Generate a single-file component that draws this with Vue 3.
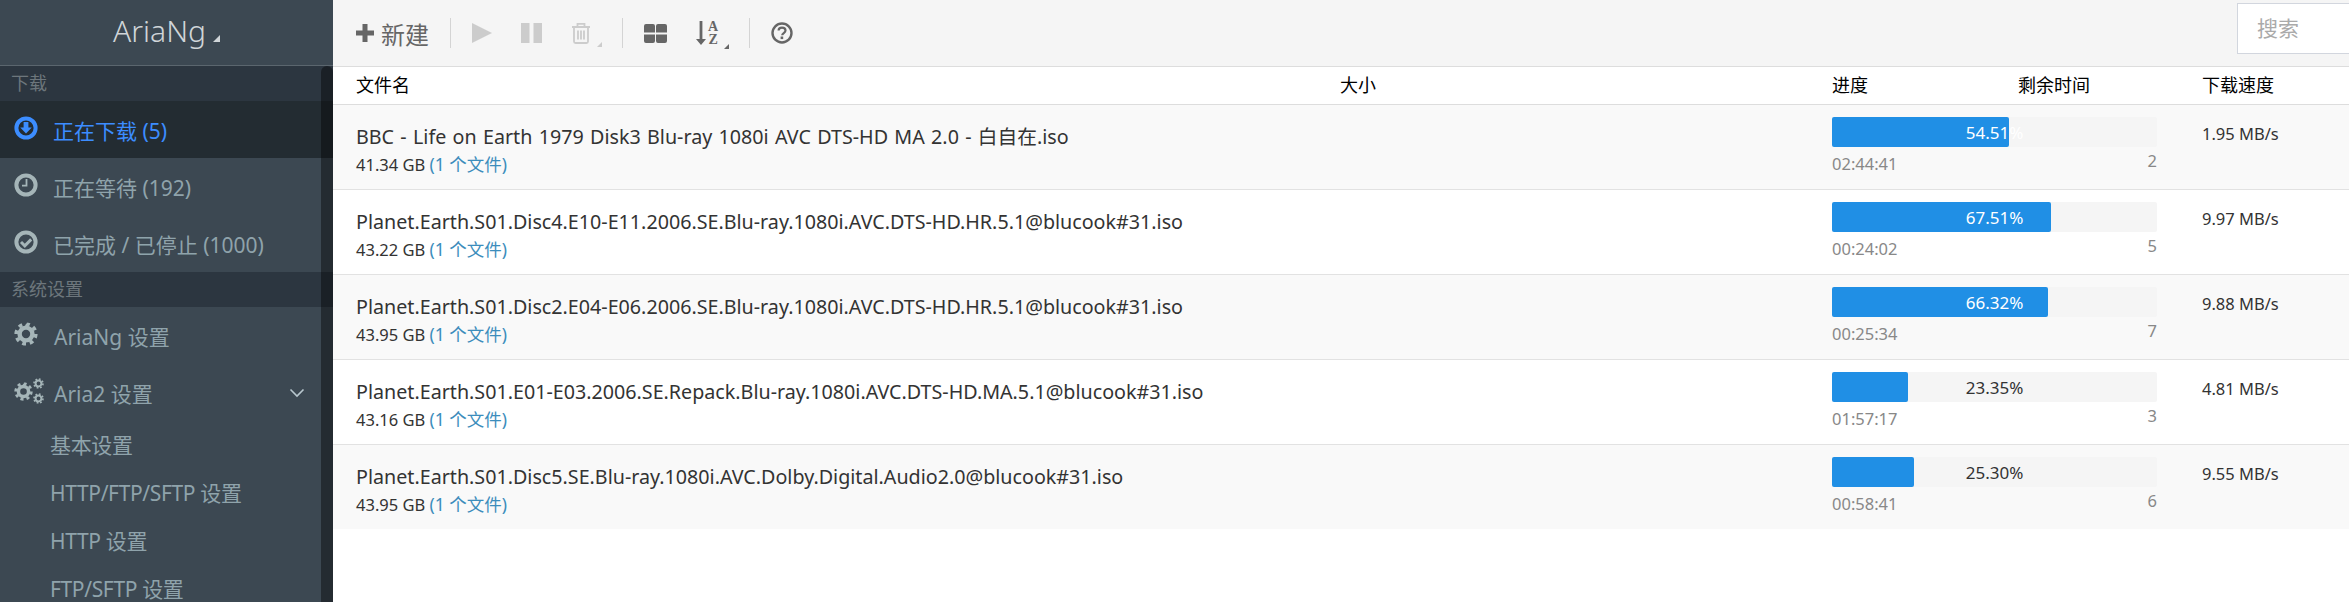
<template>
  <div class="app">
    <svg width="0" height="0" class="defs">
      <defs>
        <symbol id="gear" viewBox="0 0 24 24">
          <circle cx="12" cy="12" r="6.4" fill="none" stroke="currentColor" stroke-width="4.4" />
          <circle cx="12" cy="12" r="9.8" fill="none" stroke="currentColor" stroke-width="3.6" pathLength="64" stroke-dasharray="4 4" />
        </symbol>
      </defs>
    </svg>

    <aside class="sidebar">
      <div class="logo">AriaNg<span class="corner logo-corner"></span></div>
      <div class="scroll-track"></div>
      <div class="menu">
        <div class="menu-head">下载</div>
        <div class="menu-item active">
          <svg class="menu-icon" viewBox="0 0 24 24">
            <circle cx="12" cy="12" r="9.6" fill="none" stroke="currentColor" stroke-width="4" />
            <path d="M9.6 6h4.8v5.4h3.4L12 17.4l-5.800-6h3.400z" fill="currentColor" />
          </svg>
          <span>正在下载 (5)</span>
        </div>
        <div class="menu-item">
          <svg class="menu-icon" viewBox="0 0 24 24">
            <circle cx="12" cy="12" r="9.6" fill="none" stroke="currentColor" stroke-width="4" />
            <path d="M13.400 6v7.600H8v-1.800h3.600V6z" fill="currentColor" />
          </svg>
          <span>正在等待 (192)</span>
        </div>
        <div class="menu-item">
          <svg class="menu-icon" viewBox="0 0 24 24">
            <circle cx="12" cy="12" r="9.6" fill="none" stroke="currentColor" stroke-width="4" />
            <path d="M7 12l3.800 3.800L17.200 9.400" fill="none" stroke="currentColor" stroke-width="3" />
          </svg>
          <span>已完成 / 已停止 (1000)</span>
        </div>
        <div class="menu-head">系统设置</div>
        <div class="menu-item">
          <svg class="menu-icon"><use href="#gear" /></svg>
          <span class="latin-first">AriaNg 设置</span>
        </div>
        <div class="menu-item">
          <svg class="menu-icon gears" viewBox="0 0 30 26">
            <use href="#gear" x="0" y="4" width="19" height="19" />
            <use href="#gear" x="19" y="0" width="11" height="11" />
            <use href="#gear" x="19" y="15" width="11" height="11" />
          </svg>
          <span>Aria2 设置</span>
          <svg class="chevron" viewBox="0 0 16 10">
            <path d="M1.500 1.500L8 8l6.500-6.500" fill="none" stroke="currentColor" stroke-width="1.600" />
          </svg>
        </div>
        <div class="sub-item" v-for="item in subItems" :key="item">{{ item }}</div>
      </div>
    </aside>

    <main class="main">
      <div class="toolbar">
        <div class="tool new">
          <svg class="tool-plus" viewBox="0 0 20 20"><path d="M7.500 1h5v6.500H19v5h-6.500V19h-5v-6.500H1v-5h6.500z" fill="currentColor" /></svg>
          <span>新建</span>
        </div>
        <i class="sep"></i>
        <div class="tool disabled">
          <svg width="20" height="22" viewBox="0 0 20 22"><path d="M0 1l20 10L0 21z" fill="currentColor" /></svg>
        </div>
        <div class="tool disabled">
          <svg width="21" height="22" viewBox="0 0 21 22"><path d="M0 1h8.500v20H0zM12.500 1H21v20h-8.500z" fill="currentColor" /></svg>
        </div>
        <div class="tool disabled wide">
          <svg width="20" height="22" viewBox="0 0 20 22">
            <path d="M1 5h18M6.500 5V1.800h7V5M3 5v14.500a1.500 1.500 0 0 0 1.500 1.500h11a1.500 1.500 0 0 0 1.500-1.500V5M7 8.500v9M10 8.500v9M13 8.500v9" fill="none" stroke="currentColor" stroke-width="1.800" />
          </svg>
          <span class="corner"></span>
        </div>
        <i class="sep"></i>
        <div class="tool">
          <svg width="23" height="19" viewBox="0 0 23 19"><path d="M2 0h7a2 2 0 0 1 2 2v6.500H0V2a2 2 0 0 1 2-2zM14 0h7a2 2 0 0 1 2 2v6.500H12V2a2 2 0 0 1 2-2zM0 10.500h11V17a2 2 0 0 1-2 2H2a2 2 0 0 1-2-2zM12 10.500h11V17a2 2 0 0 1-2 2h-7a2 2 0 0 1-2-2z" fill="currentColor" /></svg>
        </div>
        <div class="tool sort wide">
          <svg width="10" height="24" viewBox="0 0 10 24"><path d="M3.600 0h2.800v18H10l-5 6-5-6h3.600z" fill="currentColor" /></svg>
          <span class="az"><b>A</b><b>Z</b></span>
          <span class="corner"></span>
        </div>
        <i class="sep"></i>
        <div class="tool">
          <svg width="22" height="22" viewBox="0 0 22 22">
            <circle cx="11" cy="11" r="9.500" fill="none" stroke="currentColor" stroke-width="2.400" />
            <path d="M7.600 8.600c0-2 1.500-3 3.400-3s3.500 1.100 3.500 3c0 2.400-3.300 2.500-3.300 4.600" fill="none" stroke="currentColor" stroke-width="2.200" />
            <path d="M9.600 14.500h2.600v2.600H9.600z" fill="currentColor" />
          </svg>
        </div>
        <div class="search">搜索</div>
      </div>

      <div class="table-head">
        <span class="col-name">文件名</span>
        <span class="col-size">大小</span>
        <span class="col-progress">进度</span>
        <span class="col-remain">剩余时间</span>
        <span class="col-speed">下载速度</span>
      </div>

      <div class="row" v-for="task in tasks" :key="task.name">
        <div class="task-info">
          <div class="task-name">{{ task.name }}</div>
          <div class="task-size">{{ task.size }} <span class="files">(1 个文件)</span></div>
        </div>
        <div class="task-progress">
          <div class="bar">
            <div class="bar-fill" :style="{ width: task.percent + '%' }"></div>
            <span class="bar-text" :class="{ light: task.percent > 50 }">{{ task.percent.toFixed(2) }}%</span>
          </div>
          <div class="task-meta">
            <span class="time">{{ task.time }}</span>
            <span class="conn">{{ task.conn }}</span>
          </div>
        </div>
        <div class="task-speed">{{ task.speed }}</div>
      </div>
    </main>
  </div>
</template>

<script setup>
const subItems = ['基本设置', 'HTTP/FTP/SFTP 设置', 'HTTP 设置', 'FTP/SFTP 设置']

const tasks = [
  { name: 'BBC - Life on Earth 1979 Disk3 Blu-ray 1080i AVC DTS-HD MA 2.0 - 白自在.iso', size: '41.34 GB', percent: 54.51, time: '02:44:41', conn: 2, speed: '1.95 MB/s' },
  { name: 'Planet.Earth.S01.Disc4.E10-E11.2006.SE.Blu-ray.1080i.AVC.DTS-HD.HR.5.1@blucook#31.iso', size: '43.22 GB', percent: 67.51, time: '00:24:02', conn: 5, speed: '9.97 MB/s' },
  { name: 'Planet.Earth.S01.Disc2.E04-E06.2006.SE.Blu-ray.1080i.AVC.DTS-HD.HR.5.1@blucook#31.iso', size: '43.95 GB', percent: 66.32, time: '00:25:34', conn: 7, speed: '9.88 MB/s' },
  { name: 'Planet.Earth.S01.E01-E03.2006.SE.Repack.Blu-ray.1080i.AVC.DTS-HD.MA.5.1@blucook#31.iso', size: '43.16 GB', percent: 23.35, time: '01:57:17', conn: 3, speed: '4.81 MB/s' },
  { name: 'Planet.Earth.S01.Disc5.SE.Blu-ray.1080i.AVC.Dolby.Digital.Audio2.0@blucook#31.iso', size: '43.95 GB', percent: 25.3, time: '00:58:41', conn: 6, speed: '9.55 MB/s' }
]
</script>

<style>
html, body {
  margin: 0;
  background: #fff;
  overflow: hidden;
}
</style>

<style scoped>
.app {
  display: flex;
  height: 602px;
  overflow: hidden;
  font-family: "Noto Sans", "Noto Sans CJK SC", sans-serif;
  color: #333;
}
.defs {
  position: absolute;
}

.sidebar {
  position: relative;
  flex: 0 0 333px;
  height: 602px;
  background: #3c4852;
  overflow: hidden;
}
.logo {
  height: 65px;
  line-height: 61px;
  text-align: center;
  font-size: 30px;
  font-weight: 300;
  color: #d0d5d8;
  border-bottom: 1px solid #5b666e;
}
.corner {
  display: inline-block;
  width: 0;
  height: 0;
  border-style: solid;
  border-width: 0 0 7px 7px;
  border-color: transparent transparent currentColor transparent;
}
.logo-corner {
  margin-left: 7px;
  color: #d0d5d8;
}
.scroll-track {
  position: absolute;
  left: 321px;
  top: 66px;
  width: 12px;
  bottom: 0;
  background: rgba(0, 0, 0, 0.4);
  border-radius: 6px 6px 0 0;
}
.menu-head {
  height: 35px;
  line-height: 35px;
  padding-left: 11px;
  font-size: 18px;
  color: #6d767c;
  background: #2c3640;
}
.menu-item {
  display: flex;
  align-items: center;
  height: 57px;
  padding-left: 14px;
  font-size: 21px;
  color: #8fa3ab;
}
.menu-item span {
  margin-left: 15px;
}
.menu-item span.latin-first {
  margin-left: 16px;
}
.menu-item.active {
  background: #232c32;
  color: #3c8dff;
}
.menu-icon {
  width: 24px;
  height: 24px;
  color: #a5b5b8;
  margin-top: -4px;
}
.active .menu-icon {
  color: #3c8dff;
}
.gears {
  width: 30px;
  height: 26px;
}
.gears + span {
  margin-left: 10px;
}
.chevron {
  width: 16px;
  height: 10px;
  margin-left: auto;
  margin-right: 28px;
  color: #b8c7ce;
}
.sub-item {
  height: 48px;
  line-height: 48px;
  padding-left: 50px;
  font-size: 21px;
  letter-spacing: -0.35px;
  color: #8fa3ab;
}

.main {
  flex: 1;
  min-width: 0;
}
.toolbar {
  display: flex;
  align-items: center;
  height: 66px;
  background: #f5f5f5;
  border-bottom: 1px solid #ddd;
  color: #666;
  padding-left: 22px;
}
.tool {
  position: relative;
  display: flex;
  align-items: center;
  margin-right: 29px;
}
.tool.wide {
  margin-right: 31px;
}
.tool.disabled {
  color: #ccc;
}
.tool.new {
  font-size: 24px;
  margin-right: 21px;
}
.tool-plus {
  width: 20px;
  height: 20px;
  margin-right: 6px;
}
.tool .corner {
  position: absolute;
  right: -11px;
  bottom: -3px;
  border-width: 0 0 5px 5px;
}
.sep {
  width: 1px;
  height: 30px;
  background: #d4d4d4;
  margin-right: 21px;
}
.sort {
  gap: 2px;
}
.az {
  display: flex;
  flex-direction: column;
  line-height: 13px;
  font-size: 14px;
  font-family: "Liberation Serif", serif;
  text-align: center;
}
.az b {
  font-weight: 700;
}
.search {
  position: absolute;
  right: 0;
  top: 3px;
  width: 92px;
  height: 49px;
  line-height: 49px;
  padding-left: 19px;
  background: #fff;
  border: 1px solid #d2d6de;
  border-right: 0;
  font-size: 21px;
  color: #aaa;
}

.table-head {
  position: relative;
  height: 37px;
  line-height: 37px;
  font-size: 18px;
  color: #000;
  border-bottom: 1px solid #ddd;
}
.table-head span {
  position: absolute;
  top: 0;
}
.col-name { left: 23px; }
.col-size { left: 1007px; }
.col-progress { left: 1499px; }
.col-remain { left: 1685px; }
.col-speed { left: 1869px; }

.row {
  display: flex;
  padding-top: 12px;
  box-sizing: border-box;
  border-bottom: 1px solid #e2e2e2;
  height: 85px;
}
.row:last-child {
  border-bottom: 0;
  height: 84px;
}
.row:nth-of-type(odd) {
  background: #f9f9f9;
}
.task-info {
  width: 1476px;
  padding-left: 23px;
  flex: none;
}
.task-name {
  font-size: 19.7px;
  word-spacing: 1.2px;
  line-height: 26px;
  margin-top: 7px;
}
.task-size {
  font-size: 16.5px;
  line-height: 26px;
  margin-top: 1px;
}
.files {
  font-size: 17.5px;
  color: #3c8dbc;
}
.task-progress {
  flex: none;
  width: 325px;
}
.bar {
  position: relative;
  height: 30px;
  background: #f5f5f5;
  border-radius: 2px;
}
.bar-fill {
  height: 100%;
  background: #208fe5;
  border-radius: 2px;
}
.bar-text {
  position: absolute;
  left: 0;
  right: 0;
  top: 0;
  line-height: 32px;
  text-align: center;
  font-size: 17px;
}
.bar-text.light {
  color: #fff;
}
.task-meta {
  display: flex;
  justify-content: space-between;
  font-size: 16.5px;
  color: #888;
  line-height: 24px;
  margin-top: 5px;
}
.conn {
  margin-top: -3px;
}
.task-speed {
  margin-left: 45px;
  font-size: 16.5px;
  line-height: 34px;
}
</style>
